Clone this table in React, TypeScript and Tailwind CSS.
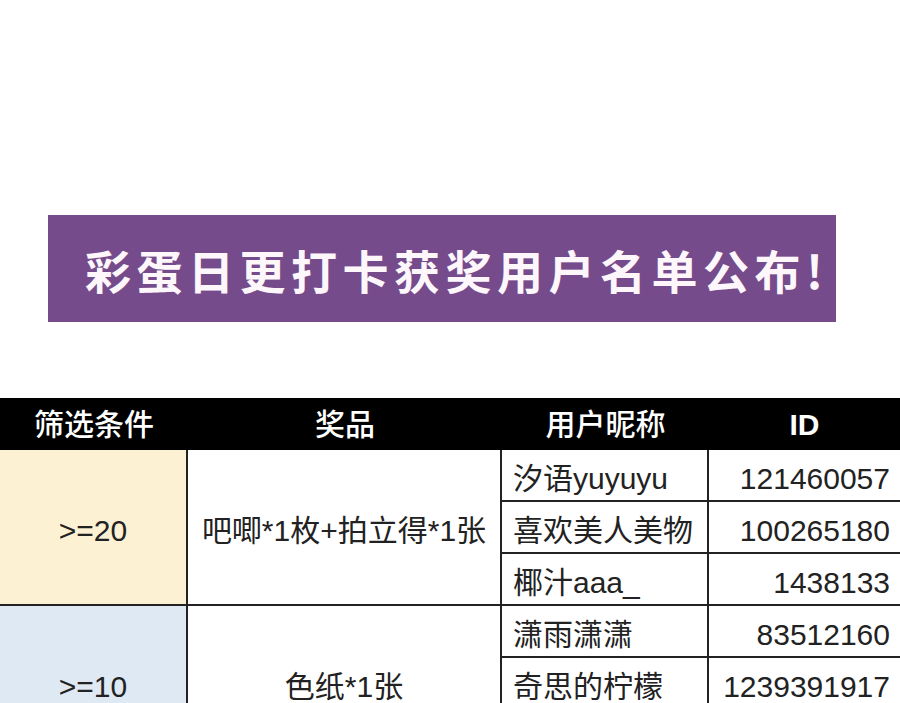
const font = "font-['Liberation_Sans','Noto_Sans_CJK_SC',sans-serif]";

const groups = [
  {
    cond: '>=20',
    bg: 'bg-[#fdf1d4]',
    prize: '吧唧*1枚+拍立得*1张',
    users: [
      { name: '汐语yuyuyu', id: '121460057' },
      { name: '喜欢美人美物', id: '100265180' },
      { name: '椰汁aaa_', id: '1438133' },
    ],
  },
  {
    cond: '>=10',
    bg: 'bg-[#dfe9f4]',
    prize: '色纸*1张',
    users: [
      { name: '潇雨潇潇', id: '83512160' },
      { name: '奇思的柠檬', id: '1239391917' },
      { name: '', id: '' },
    ],
  },
];

export default function App() {
  return (
    <div className={`w-[900px] h-[703px] overflow-hidden bg-white ${font}`}>
      <div className="pt-[215px] pl-[48px]">
        <div className="w-[788px] h-[107px] bg-[#754b8b] flex items-center pl-[37px]">
          <span className="text-[46px] font-bold tracking-[5.5px] text-[#fdf6fb] font-['Noto_Sans_CJK_SC',sans-serif] leading-none">
            彩蛋日更打卡获奖用户名单公布!
          </span>
        </div>
      </div>

      <div className="mt-[76px] w-[900px] text-[#222] text-[30px]">
        <div className="flex h-[52px] bg-black text-white font-medium">
          <div className="w-[188px] flex items-center justify-center">筛选条件</div>
          <div className="w-[314px] flex items-center justify-center">奖品</div>
          <div className="w-[207px] flex items-center justify-center">用户昵称</div>
          <div className="flex-1 flex items-center justify-center font-bold">ID</div>
        </div>

        {groups.map((g) => (
          <div key={g.cond} className="flex">
            <div className={`w-[188px] ${g.bg} border-r-2 border-b-2 border-[#222] flex items-center justify-center pt-[6px]`}>
              {g.cond}
            </div>
            <div className="w-[314px] border-r-2 border-b-2 border-[#222] flex items-center justify-center whitespace-nowrap pt-[6px]">
              {g.prize}
            </div>
            <div className="flex-1 flex flex-col">
              {g.users.map((u, i) => (
                <div key={i} className="flex h-[52px] border-b-2 border-[#222]">
                  <div className="w-[207px] border-r-2 border-[#222] flex items-center pl-[11px] pt-[7px] whitespace-nowrap">
                    {u.name}
                  </div>
                  <div className="flex-1 flex items-center justify-end pr-[10px] pt-[7px]">{u.id}</div>
                </div>
              ))}
            </div>
          </div>
        ))}
      </div>
    </div>
  );
}
